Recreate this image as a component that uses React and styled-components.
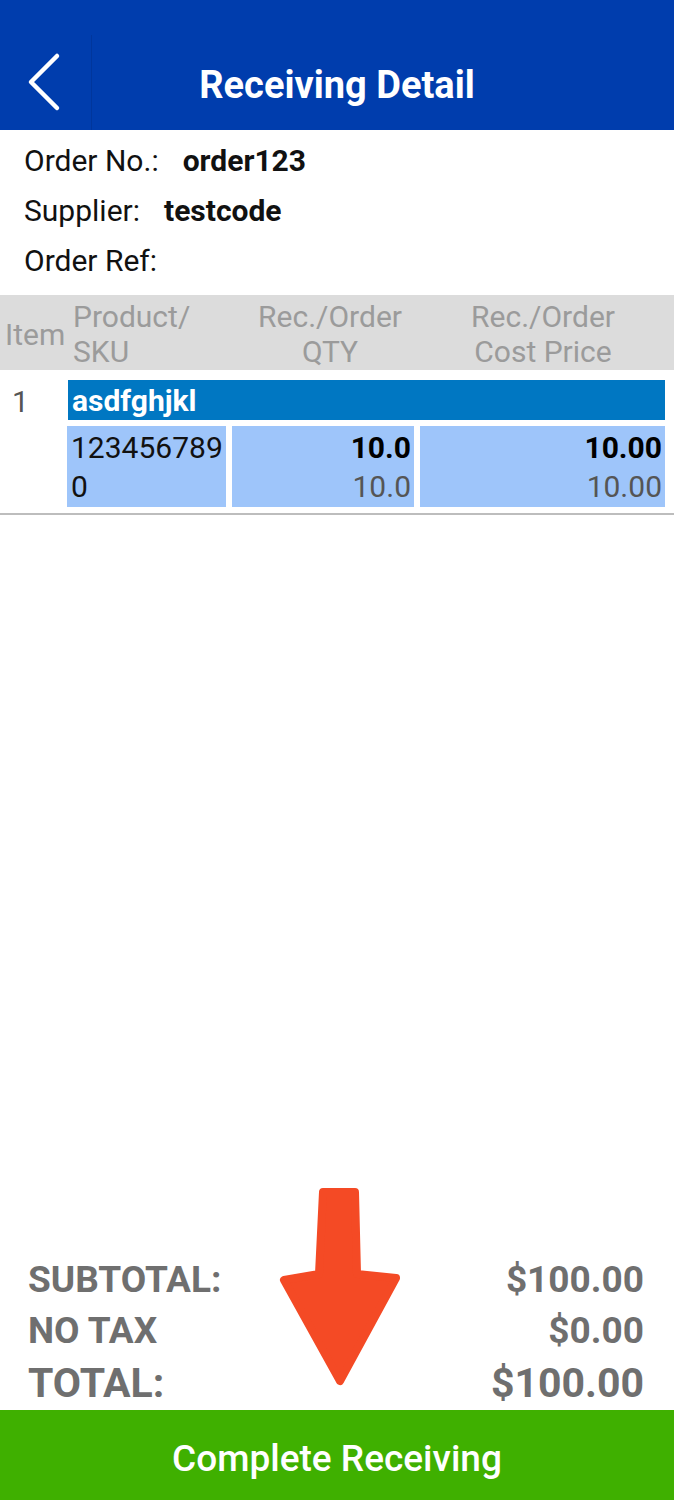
import React from "react";
import styled, { createGlobalStyle } from "styled-components";

const GlobalStyle = createGlobalStyle`
  html, body {
    margin: 0;
    padding: 0;
    background: #ffffff;
  }
  body {
    font-family: Roboto, "Liberation Sans", Arial, sans-serif;
  }
  * {
    box-sizing: border-box;
  }
`;

const Page = styled.div`
  position: relative;
  width: 674px;
  min-height: 1500px;
  display: flex;
  flex-direction: column;
  background: #ffffff;
  overflow: hidden;
`;

const Header = styled.header`
  background: #003dad;
  padding-top: 35px;
  height: 130px;
  display: grid;
  grid-template-columns: 92px 1fr 92px;
`;

const BackButton = styled.button`
  border: none;
  border-right: 1px solid #00369c;
  background: transparent;
  padding: 0;
  display: flex;
  align-items: center;
  justify-content: flex-start;
`;

const Title = styled.h1`
  margin: 0;
  padding-top: 4px;
  display: flex;
  align-items: center;
  justify-content: center;
  color: #ffffff;
  font-size: 38px;
  font-weight: 700;
`;

const Info = styled.section`
  padding: 5px 24px 10px;
`;

const InfoRow = styled.div`
  display: flex;
  gap: 24px;
  height: 50px;
  align-items: center;
  font-size: 30px;
  color: #111111;
`;

const InfoValue = styled.span`
  font-weight: 700;
`;

const TableHead = styled.div`
  background: #dcdcdc;
  height: 75px;
  padding: 4px 0 1px;
  display: grid;
  grid-template-columns: 67px 159px 194px 1fr;
  align-items: center;
  color: #9b9b9b;
  font-size: 30px;
  line-height: 35px;
`;

const HeadCell = styled.div`
  text-align: ${(p) => p.align || "left"};
  padding-left: ${(p) => p.pl || 0}px;
  padding-right: ${(p) => p.pr || 0}px;
  white-space: nowrap;
`;

const ItemRow = styled.div`
  display: flex;
  padding: 10px 9px 6px 0;
  border-bottom: 2px solid #bdbdbd;
`;

const ItemNo = styled.div`
  width: 67px;
  padding-left: 12px;
  color: #555555;
  font-size: 30px;
  line-height: 44px;
`;

const ItemBody = styled.div`
  flex: 1;
  display: flex;
  flex-direction: column;
  gap: 6px;
`;

const NameBar = styled.div`
  margin-left: 1px;
  height: 40px;
  background: #0077c2;
  color: #ffffff;
  font-weight: 700;
  font-size: 30px;
  line-height: 42px;
  padding-left: 4px;
`;

const Cells = styled.div`
  display: grid;
  grid-template-columns: 159px 182px 1fr;
  column-gap: 6px;
`;

const Cell = styled.div`
  background: #9ec5fa;
  height: 81px;
  padding: 2px ${(p) => (p.right ? 3 : 2)}px 0 4px;
  text-align: ${(p) => (p.right ? "right" : "left")};
  font-size: 30px;
  line-height: 39px;
  color: #111111;
  word-break: break-all;
`;

const Strong = styled.div`
  font-weight: 700;
  color: #000000;
`;

const Muted = styled.div`
  color: #555555;
`;

const Spacer = styled.div`
  flex: 1;
`;

const Totals = styled.section`
  padding: 0 30px 0 28px;
  color: #6f6f6f;
  font-weight: 700;
`;

const TotalRow = styled.div`
  display: flex;
  justify-content: space-between;
  align-items: center;
  font-size: ${(p) => (p.big ? 41 : 37)}px;
  height: ${(p) => (p.big ? 54 : 51)}px;
`;

const CompleteButton = styled.button`
  height: 90px;
  width: 100%;
  border: none;
  background: #3fb000;
  color: #ffffff;
  font-family: inherit;
  font-size: 37px;
  font-weight: 500;
  padding-top: 8px;
`;

const Arrow = styled.svg`
  position: absolute;
  left: 270px;
  top: 1180px;
`;

export default function App() {
  return (
    <>
      <GlobalStyle />
      <Page>
        <Header>
          <BackButton aria-label="Back">
            <svg width="91" height="95" viewBox="0 0 91 95">
              <polyline
                points="57,21 31,47 57,73"
                fill="none"
                stroke="#ffffff"
                strokeWidth="4.5"
                strokeLinecap="round"
                strokeLinejoin="round"
              />
            </svg>
          </BackButton>
          <Title>Receiving Detail</Title>
          <div />
        </Header>

        <Info>
          <InfoRow>
            <span>Order No.:</span>
            <InfoValue>order123</InfoValue>
          </InfoRow>
          <InfoRow>
            <span>Supplier:</span>
            <InfoValue>testcode</InfoValue>
          </InfoRow>
          <InfoRow>
            <span>Order Ref:</span>
          </InfoRow>
        </Info>

        <TableHead>
          <HeadCell pl={5}>Item</HeadCell>
          <HeadCell pl={6}>
            Product/
            <br />
            SKU
          </HeadCell>
          <HeadCell align="center" pl={14}>
            Rec./Order
            <br />
            QTY
          </HeadCell>
          <HeadCell align="center" pr={8}>
            Rec./Order
            <br />
            Cost Price
          </HeadCell>
        </TableHead>

        <ItemRow>
          <ItemNo>1</ItemNo>
          <ItemBody>
            <NameBar>asdfghjkl</NameBar>
            <Cells>
              <Cell>1234567890</Cell>
              <Cell right>
                <Strong>10.0</Strong>
                <Muted>10.0</Muted>
              </Cell>
              <Cell right>
                <Strong>10.00</Strong>
                <Muted>10.00</Muted>
              </Cell>
            </Cells>
          </ItemBody>
        </ItemRow>

        <Spacer />

        <Totals>
          <TotalRow>
            <span>SUBTOTAL:</span>
            <span>$100.00</span>
          </TotalRow>
          <TotalRow>
            <span>NO TAX</span>
            <span>$0.00</span>
          </TotalRow>
          <TotalRow big>
            <span>TOTAL:</span>
            <span>$100.00</span>
          </TotalRow>
        </Totals>

        <CompleteButton>Complete Receiving</CompleteButton>

        <Arrow width="140" height="215" viewBox="0 0 140 215">
          <path
            d="M53 12 L85 12 L87 94 L126 98 L70 201 L14 100 L49 94 Z"
            fill="#f44a25"
            stroke="#f44a25"
            strokeWidth="8"
            strokeLinejoin="round"
          />
        </Arrow>
      </Page>
    </>
  );
}
